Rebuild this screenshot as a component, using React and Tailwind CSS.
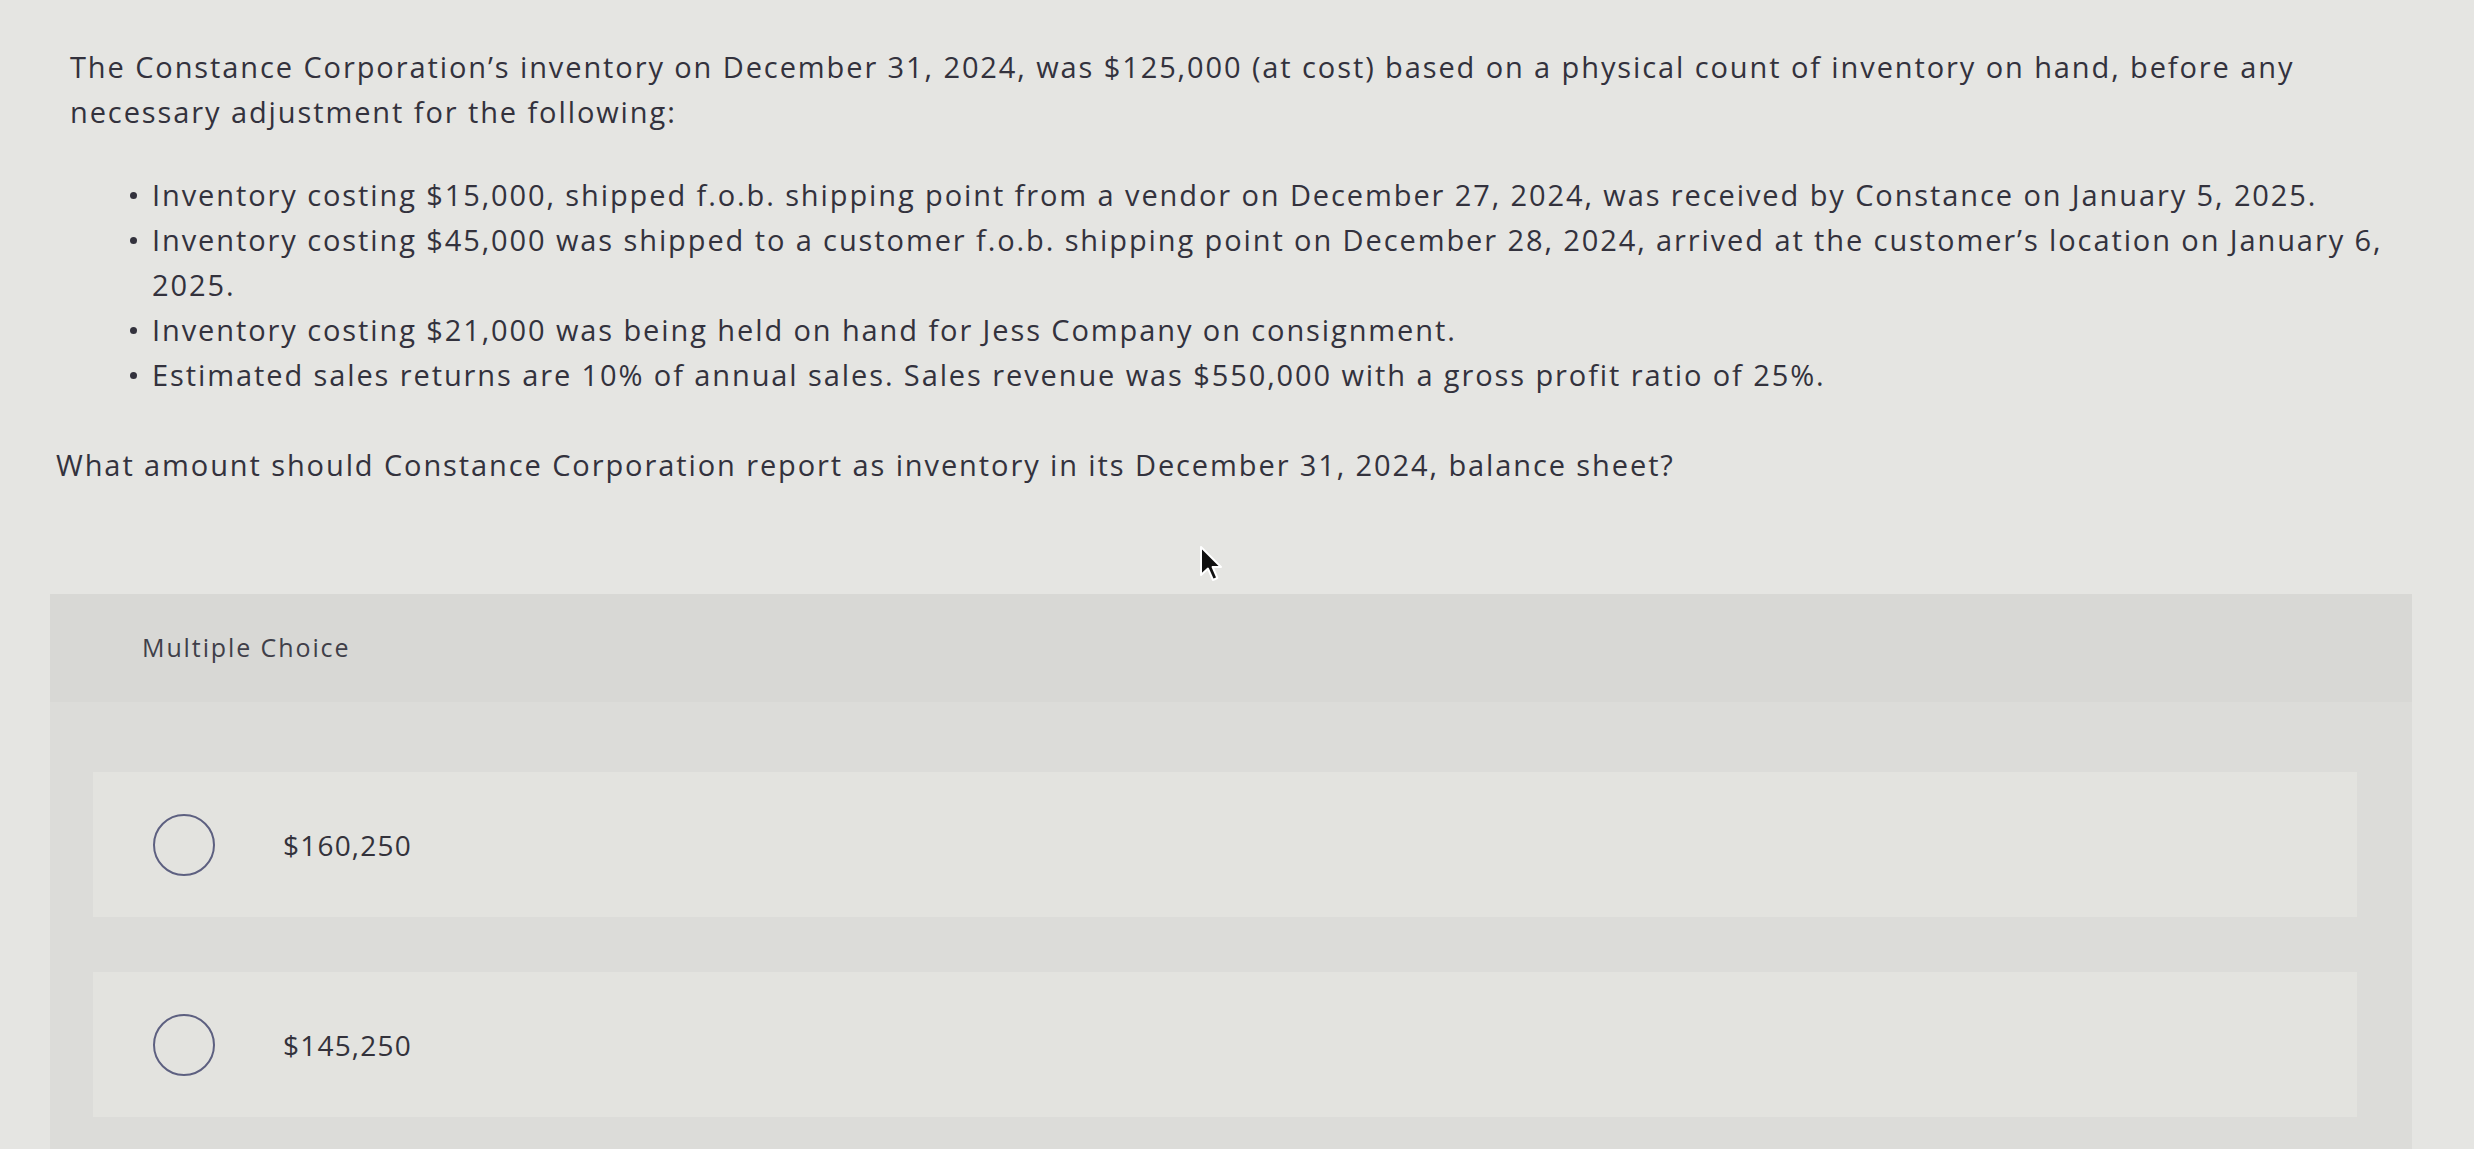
import React from 'react';

const bullets = [
  ['Inventory costing $15,000, shipped f.o.b. shipping point from a vendor on December 27, 2024, was received by Constance on January 5, 2025.'],
  [
    'Inventory costing $45,000 was shipped to a customer f.o.b. shipping point on December 28, 2024, arrived at the customer’s location on January 6,',
    '2025.',
  ],
  ['Inventory costing $21,000 was being held on hand for Jess Company on consignment.'],
  ['Estimated sales returns are 10% of annual sales. Sales revenue was $550,000 with a gross profit ratio of 25%.'],
];

const choices = ['$160,250', '$145,250'];

function Cursor() {
  return (
    <svg className="absolute left-[1199px] top-[545px]" width="24" height="38" viewBox="0 0 12 19">
      <path d="M1 1 L1 15 L4.5 11.8 L7 17.5 L9.2 16.5 L6.8 11 L11 11 Z" fill="#111" stroke="#fff" strokeWidth="1" strokeLinejoin="round" />
    </svg>
  );
}

export default function App() {
  return (
    <div className="relative min-h-screen w-full overflow-hidden bg-[#e5e5e2] font-['Open_Sans',sans-serif] text-[#33323d]">
      {/* question text */}
      <div className="pl-[70px] pr-[20px] pt-[44px] font-medium">
        <p className="text-[29px] leading-[45px] tracking-[1.9px] whitespace-nowrap">
          The Constance Corporation’s inventory on December 31, 2024, was $125,000 (at cost) based on a physical count of inventory on hand, before any
          <br />
          necessary adjustment for the following:
        </p>

        <ul className="mt-[38px] pl-[82px] text-[29px] leading-[45px] tracking-[1.9px]">
          {bullets.map((lines, i) => (
            <li key={i} className="relative whitespace-nowrap">
              <span className="absolute left-[-22px] top-[20px] h-[7px] w-[7px] rounded-full bg-[#33323d]" />
              {lines.map((l, j) => (
                <div key={j}>{l}</div>
              ))}
            </li>
          ))}
        </ul>

        <p className="-ml-[14px] mt-[45px] text-[29px] leading-[45px] tracking-[1.9px] whitespace-nowrap">
          What amount should Constance Corporation report as inventory in its December 31, 2024, balance sheet?
        </p>
      </div>

      {/* multiple choice box */}
      <div className="ml-[50px] mr-[62px] mt-[107px] bg-[#dcdcd9] pb-[40px]">
        <div className="flex h-[108px] items-center bg-[#d8d8d5] pl-[92px] text-[25px] tracking-[1.9px] text-[#403f49]">
          Multiple Choice
        </div>
        <div className="flex flex-col gap-[55px] pl-[43px] pr-[55px] pt-[70px]">
          {choices.map((c) => (
            <div key={c} className="flex h-[145px] items-center bg-[#e3e3df] pl-[60px]">
              <span className="h-[62px] w-[62px] shrink-0 rounded-full border-[2.5px] border-[#5d6080]" />
              <span className="ml-[68px] text-[28px] font-medium tracking-[1.2px] text-[#33323b]">{c}</span>
            </div>
          ))}
        </div>
      </div>

      <Cursor />
    </div>
  );
}
